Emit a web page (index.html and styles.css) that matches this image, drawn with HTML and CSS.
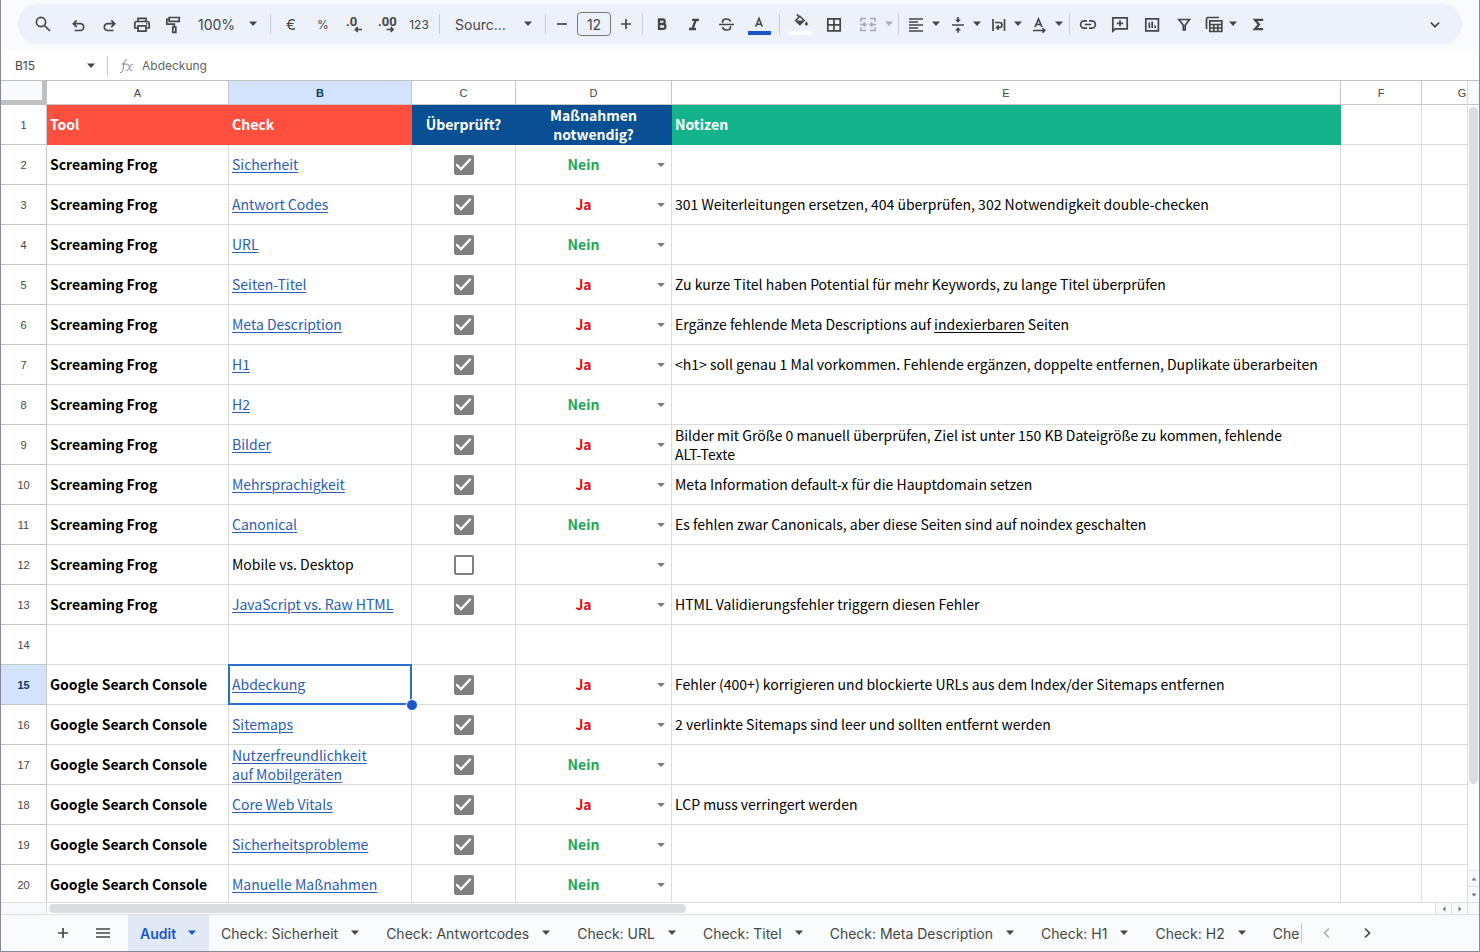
FILE: index.html
```html
<!DOCTYPE html>
<html lang="de">
<head>
<meta charset="utf-8">
<title>Audit</title>
<link rel="stylesheet" href="styles.css">
</head>
<body>
<svg class="sprite" aria-hidden="true">
  <symbol id="caret" viewBox="0 0 10 6"><path d="M1 .5h8L5 5z"/></symbol>
</svg>
<div class="app">
  <header class="top">
    <div class="toolbar" role="toolbar" aria-label="Werkzeuge">
      <button class="tool first" aria-label="Suchen"><svg class="icon" viewBox="0 0 20 20"><circle cx="8" cy="8" r="4.6"/><path d="M11.5 11.5 17 17"/></svg></button>
      <button class="tool" aria-label="Rückgängig"><svg class="icon" viewBox="0 0 20 20"><path d="M8.700 6.300 5.300 9.700l3.400 3.400M5.500 9.700h6.800a3.400 3.400 0 0 1 0 6.800H6.500"/></svg></button>
      <button class="tool" aria-label="Wiederholen"><svg class="icon" viewBox="0 0 20 20"><path d="m11.300 6.300 3.400 3.400-3.400 3.400M14.500 9.700H7.700a3.400 3.400 0 0 0 0 6.800h5.800"/></svg></button>
      <button class="tool" aria-label="Drucken"><svg class="icon" viewBox="0 0 20 20"><path d="M6 7.500V4.300h8v3.200M5.500 14H2.800V9.500a2 2 0 0 1 2-2h10.400a2 2 0 0 1 2 2V14h-2.700M6 11.800h8v5.400H6z"/><path class="solid" d="M14 9h1.500v1.500H14z"/></svg></button>
      <button class="tool" aria-label="Format übertragen"><svg class="icon" viewBox="0 0 20 20"><path d="M5.200 3.500h10v3.800h-10zM5.200 5.300H2.800v4.800h7.500v2.700M8.800 13h3v5.300h-3z"/></svg></button>
      <select class="zoom" aria-label="Zoom"><option>100%</option></select>
      <span class="sep"></span>
      <button class="tool light" aria-label="Währung">€</button>
      <button class="tool light small" aria-label="Prozent">%</button>
      <button class="tool" aria-label="Dezimalstelle löschen"><svg class="icon" viewBox="0 0 20 20"><text x="1" y="12">.0</text><path d="M17 15.500h-6.500M12.800 13.200l-2.300 2.300 2.300 2.300"/></svg></button>
      <button class="tool" aria-label="Dezimalstelle hinzufügen"><svg class="icon" viewBox="0 0 20 20"><text x="1" y="12">.00</text><path d="M9.500 15.500H16M13.700 13.200l2.300 2.300-2.300 2.300"/></svg></button>
      <button class="tool light small" aria-label="Zahlenformat">123</button>
      <span class="sep"></span>
      <select class="font" aria-label="Schriftart"><option>Sourc...</option></select>
      <span class="sep"></span>
      <button class="tool narrow" aria-label="Kleiner"><svg class="icon" viewBox="0 0 20 20"><path d="M5 10h10"/></svg></button>
      <input class="size" type="text" value="12" aria-label="Schriftgröße">
      <button class="tool narrow" aria-label="Größer"><svg class="icon" viewBox="0 0 20 20"><path d="M5 10h10M10 5v10"/></svg></button>
      <span class="sep"></span>
      <button class="tool" aria-label="Fett"><svg class="icon bold" viewBox="0 0 20 20"><path d="M6 5.500h3.500a2.200 2.200 0 0 1 0 4.500H6zM6 10h4a2.400 2.400 0 0 1 0 4.800H6z"/></svg></button>
      <button class="tool" aria-label="Kursiv"><svg class="icon bold" viewBox="0 0 20 20"><path d="M7 5.800h7M4 15h7M10.800 6 7.300 15"/></svg></button>
      <button class="tool" aria-label="Durchgestrichen"><svg class="icon" viewBox="0 0 20 20"><path d="M2 10.500h15M13.500 7.500C13 5.800 11.500 5 9.500 5 7 5 5.500 6 5.500 7.600c0 .5.200 1 .5 1.300M5.500 13.300c.5 1.800 2 2.700 4 2.700 2.500 0 4-1 4-2.700 0-.4-.1-.7-.2-1"/></svg></button>
      <button class="tool swatch" aria-label="Textfarbe"><svg class="icon" viewBox="0 0 20 20"><path d="M6.300 15.200 10 6l3.700 9.200M7.600 12.500h4.800"/></svg><span class="bar blue"></span></button>
      <span class="sep"></span>
      <button class="tool wide swatch" aria-label="Füllfarbe"><svg class="icon" viewBox="0 0 20 20"><path d="m5.300 1.500 2.500 2.500M8.800 3.600l4.700 4.700-4.700 4.700L4 8.300z"/><path class="solid" d="M4.500 8.300h9l-4.700 4.700zM16 9.500c1 1.300 1.600 2.100 1.600 2.900a1.600 1.600 0 0 1-3.200 0c0-.8.600-1.600 1.600-2.900z"/></svg><span class="bar white"></span></button>
      <button class="tool wide" aria-label="Rahmen"><svg class="icon" viewBox="0 0 20 20"><path d="M3.800 4.800h12.400v12H3.800zM10 4.800v12M3.800 10.800h12.400"/></svg></button>
      <button class="combo merge faded" aria-label="Zellen verbinden"><svg class="icon" viewBox="0 0 20 20"><path d="M8 4.500H3v3M12 4.500h5v3M8 16.500H3v-3M12 16.500h5v-3M2 10.500h5.500M5.500 8.300l2.200 2.200-2.200 2.200M18 10.500h-5.500M14.500 8.300l-2.200 2.200 2.200 2.200"/></svg><svg class="caret"><use href="#caret"/></svg></button>
      <span class="sep"></span>
      <button class="combo" aria-label="Ausrichten"><svg class="icon" viewBox="0 0 20 20"><path d="M2 5h14M2 8h9M2 11h14M2 14h9M2 17h14"/></svg><svg class="caret"><use href="#caret"/></svg></button>
      <button class="combo" aria-label="Vertikal ausrichten"><svg class="icon" viewBox="0 0 20 20"><path d="M4 11h12M10 3v4.500M10 18.800v-4.300"/><path class="solid" d="M7 5.500h6L10 8.800zM7 16.500h6l-3-3.300z"/></svg><svg class="caret"><use href="#caret"/></svg></button>
      <button class="combo" aria-label="Textumbruch"><svg class="icon" viewBox="0 0 20 20"><path d="M4 5v12M15.500 5v12M6 8.500h4.500a2.500 2.500 0 0 1 0 5H8M9.800 11.300l-2.200 2.200 2.200 2.200"/></svg><svg class="caret"><use href="#caret"/></svg></button>
      <button class="combo" aria-label="Textdrehung"><svg class="icon" viewBox="0 0 20 20"><path d="M5 13 8.500 5 12 13M6.200 10.500h4.600M3 16.500h11.500M12.500 14.300l2.200 2.200-2.200 2.200"/></svg><svg class="caret"><use href="#caret"/></svg></button>
      <span class="sep tight"></span>
      <button class="tool" aria-label="Link"><svg class="icon" viewBox="0 0 20 20"><path d="M9 6.800H6.300a3.700 3.700 0 0 0 0 7.400H9M11 6.800h2.700a3.700 3.700 0 0 1 0 7.400H11M6.800 10.500h6.400"/></svg></button>
      <button class="tool" aria-label="Kommentar"><svg class="icon" viewBox="0 0 20 20"><path d="M2.800 17V3.800h14.400v11H5.200zM10 6.300v6M7 9.300h6"/></svg></button>
      <button class="tool" aria-label="Diagramm"><svg class="icon" viewBox="0 0 20 20"><path d="M3.800 4.800h12.600v12H3.800zM7.300 8.500V14M10.200 7.500V14M13.200 11.500V14"/></svg></button>
      <button class="tool" aria-label="Filter"><svg class="icon" viewBox="0 0 20 20"><path d="M5 5.500h10.500l-4.300 5.700V16H9.300v-4.800z"/></svg></button>
      <button class="combo" aria-label="Filteransichten"><svg class="icon" viewBox="0 0 20 20"><path d="M2.500 15V5a1.500 1.500 0 0 1 1.500-1.500h11M5.800 6.800h12v10.700h-12zM5.800 10.500h12M5.800 14h12M9.800 10.500v7M13.800 10.500v7"/></svg><svg class="caret"><use href="#caret"/></svg></button>
      <button class="tool" aria-label="Funktionen"><svg class="icon bold" viewBox="0 0 20 20"><path d="M15 7V5.800H8l4 4.700-4 4.700h7V14"/></svg></button>
      <button class="tool last" aria-label="Menüs ausblenden"><svg class="icon" viewBox="0 0 20 20"><path d="m5.800 8.500 4.200 4.200 4.200-4.200"/></svg></button>
    </div>
  </header>
  <div class="formula">
    <input class="name" type="text" value="B15" aria-label="Namenfeld">
    <svg class="caret"><use href="#caret"/></svg>
    <span class="sep"></span>
    <svg class="fx" viewBox="0 0 16 16" aria-hidden="true"><path d="M1 14.500c2 .5 2.500-1 3-3.500l1-6c.4-2.500 1.200-3.500 3.200-3M2.500 6h5M7.500 6.500c2-.8 2.500.5 3 3s1 4 3 3M14 6.300c-2-.5-2.700 1-3.500 3s-1.800 4-3.500 3"/></svg>
    <input class="content" type="text" value="Abdeckung" aria-label="Bearbeitungsleiste">
  </div>
  <main class="sheet">
    <div class="grid">
      <table>
        <colgroup><col class="c0"><col class="ca"><col class="cb"><col class="cc"><col class="cd"><col class="ce"><col class="cf"><col class="cf"></colgroup>
        <thead><tr><th class="corner"></th><th>A</th><th class="active">B</th><th>C</th><th>D</th><th>E</th><th>F</th><th>G</th></tr></thead>
        <tbody>
          <tr class="title"><th>1</th><td class="red">Tool</td><td class="red">Check</td><td class="navy">Überprüft?</td><td class="navy">Maßnahmen<br>notwendig?</td><td class="green">Notizen</td><td></td><td></td></tr>
          <tr><th>2</th><td class="b">Screaming Frog</td><td><a href="#">Sicherheit</a></td><td class="tick"><input type="checkbox" aria-label="Überprüft 2" checked></td><td class="pick"><select class="no" aria-label="Maßnahmen 2"><option>Nein</option><option>Ja</option></select></td><td></td><td></td><td></td></tr>
          <tr><th>3</th><td class="b">Screaming Frog</td><td><a href="#">Antwort Codes</a></td><td class="tick"><input type="checkbox" aria-label="Überprüft 3" checked></td><td class="pick"><select class="yes" aria-label="Maßnahmen 3"><option>Ja</option><option>Nein</option></select></td><td>301 Weiterleitungen ersetzen, 404 überprüfen, 302 Notwendigkeit double-checken</td><td></td><td></td></tr>
          <tr><th>4</th><td class="b">Screaming Frog</td><td><a href="#">URL</a></td><td class="tick"><input type="checkbox" aria-label="Überprüft 4" checked></td><td class="pick"><select class="no" aria-label="Maßnahmen 4"><option>Nein</option><option>Ja</option></select></td><td></td><td></td><td></td></tr>
          <tr><th>5</th><td class="b">Screaming Frog</td><td><a href="#">Seiten-Titel</a></td><td class="tick"><input type="checkbox" aria-label="Überprüft 5" checked></td><td class="pick"><select class="yes" aria-label="Maßnahmen 5"><option>Ja</option><option>Nein</option></select></td><td>Zu kurze Titel haben Potential für mehr Keywords, zu lange Titel überprüfen</td><td></td><td></td></tr>
          <tr><th>6</th><td class="b">Screaming Frog</td><td><a href="#">Meta Description</a></td><td class="tick"><input type="checkbox" aria-label="Überprüft 6" checked></td><td class="pick"><select class="yes" aria-label="Maßnahmen 6"><option>Ja</option><option>Nein</option></select></td><td>Ergänze fehlende Meta Descriptions auf <u>indexierbaren</u> Seiten</td><td></td><td></td></tr>
          <tr><th>7</th><td class="b">Screaming Frog</td><td><a href="#">H1</a></td><td class="tick"><input type="checkbox" aria-label="Überprüft 7" checked></td><td class="pick"><select class="yes" aria-label="Maßnahmen 7"><option>Ja</option><option>Nein</option></select></td><td>&lt;h1&gt; soll genau 1 Mal vorkommen. Fehlende ergänzen, doppelte entfernen, Duplikate überarbeiten</td><td></td><td></td></tr>
          <tr><th>8</th><td class="b">Screaming Frog</td><td><a href="#">H2</a></td><td class="tick"><input type="checkbox" aria-label="Überprüft 8" checked></td><td class="pick"><select class="no" aria-label="Maßnahmen 8"><option>Nein</option><option>Ja</option></select></td><td></td><td></td><td></td></tr>
          <tr><th>9</th><td class="b">Screaming Frog</td><td><a href="#">Bilder</a></td><td class="tick"><input type="checkbox" aria-label="Überprüft 9" checked></td><td class="pick"><select class="yes" aria-label="Maßnahmen 9"><option>Ja</option><option>Nein</option></select></td><td>Bilder mit Größe 0 manuell überprüfen, Ziel ist unter 150 KB Dateigröße zu kommen, fehlende<br>ALT-Texte</td><td></td><td></td></tr>
          <tr><th>10</th><td class="b">Screaming Frog</td><td><a href="#">Mehrsprachigkeit</a></td><td class="tick"><input type="checkbox" aria-label="Überprüft 10" checked></td><td class="pick"><select class="yes" aria-label="Maßnahmen 10"><option>Ja</option><option>Nein</option></select></td><td>Meta Information default-x für die Hauptdomain setzen</td><td></td><td></td></tr>
          <tr><th>11</th><td class="b">Screaming Frog</td><td><a href="#">Canonical</a></td><td class="tick"><input type="checkbox" aria-label="Überprüft 11" checked></td><td class="pick"><select class="no" aria-label="Maßnahmen 11"><option>Nein</option><option>Ja</option></select></td><td>Es fehlen zwar Canonicals, aber diese Seiten sind auf noindex geschalten</td><td></td><td></td></tr>
          <tr><th>12</th><td class="b">Screaming Frog</td><td>Mobile vs. Desktop</td><td class="tick"><input type="checkbox" aria-label="Überprüft 12"></td><td class="pick"><select aria-label="Maßnahmen 12"><option></option><option>Ja</option><option>Nein</option></select></td><td></td><td></td><td></td></tr>
          <tr><th>13</th><td class="b">Screaming Frog</td><td><a href="#">JavaScript vs. Raw HTML</a></td><td class="tick"><input type="checkbox" aria-label="Überprüft 13" checked></td><td class="pick"><select class="yes" aria-label="Maßnahmen 13"><option>Ja</option><option>Nein</option></select></td><td>HTML Validierungsfehler triggern diesen Fehler</td><td></td><td></td></tr>
          <tr><th>14</th><td></td><td></td><td></td><td></td><td></td><td></td><td></td></tr>
          <tr><th class="active">15</th><td class="b">Google Search Console</td><td class="selected"><a href="#">Abdeckung</a></td><td class="tick"><input type="checkbox" aria-label="Überprüft 15" checked></td><td class="pick"><select class="yes" aria-label="Maßnahmen 15"><option>Ja</option><option>Nein</option></select></td><td>Fehler (400+) korrigieren und blockierte URLs aus dem Index/der Sitemaps entfernen</td><td></td><td></td></tr>
          <tr><th>16</th><td class="b">Google Search Console</td><td><a href="#">Sitemaps</a></td><td class="tick"><input type="checkbox" aria-label="Überprüft 16" checked></td><td class="pick"><select class="yes" aria-label="Maßnahmen 16"><option>Ja</option><option>Nein</option></select></td><td>2 verlinkte Sitemaps sind leer und sollten entfernt werden</td><td></td><td></td></tr>
          <tr><th>17</th><td class="b">Google Search Console</td><td><a href="#">Nutzerfreundlichkeit<br>auf Mobilgeräten</a></td><td class="tick"><input type="checkbox" aria-label="Überprüft 17" checked></td><td class="pick"><select class="no" aria-label="Maßnahmen 17"><option>Nein</option><option>Ja</option></select></td><td></td><td></td><td></td></tr>
          <tr><th>18</th><td class="b">Google Search Console</td><td><a href="#">Core Web Vitals</a></td><td class="tick"><input type="checkbox" aria-label="Überprüft 18" checked></td><td class="pick"><select class="yes" aria-label="Maßnahmen 18"><option>Ja</option><option>Nein</option></select></td><td>LCP muss verringert werden</td><td></td><td></td></tr>
          <tr><th>19</th><td class="b">Google Search Console</td><td><a href="#">Sicherheitsprobleme</a></td><td class="tick"><input type="checkbox" aria-label="Überprüft 19" checked></td><td class="pick"><select class="no" aria-label="Maßnahmen 19"><option>Nein</option><option>Ja</option></select></td><td></td><td></td><td></td></tr>
          <tr><th>20</th><td class="b">Google Search Console</td><td><a href="#">Manuelle Maßnahmen</a></td><td class="tick"><input type="checkbox" aria-label="Überprüft 20" checked></td><td class="pick"><select class="no" aria-label="Maßnahmen 20"><option>Nein</option><option>Ja</option></select></td><td></td><td></td><td></td></tr>
        </tbody>
      </table>
    </div>
    <div class="vscroll">
      <div class="vhead"></div>
      <div class="vtrack"><div class="vthumb"></div></div>
      <button class="step" aria-label="Nach oben"><svg viewBox="0 0 6 6"><path d="M.5 4.500h5L3 1.500z"/></svg></button>
      <button class="step" aria-label="Nach unten"><svg viewBox="0 0 6 6"><path d="M.5 1.500h5L3 4.500z"/></svg></button>
    </div>
  </main>
  <div class="hscroll">
    <div class="hhead"></div>
    <div class="htrack"><div class="hthumb"></div></div>
    <button class="step" aria-label="Nach links"><svg viewBox="0 0 6 6"><path d="M4.500 .5v5L1.500 3z"/></svg></button>
    <button class="step" aria-label="Nach rechts"><svg viewBox="0 0 6 6"><path d="M1.500 .5v5L4.500 3z"/></svg></button>
    <div class="hcorner"></div>
  </div>
  <footer class="tabs">
    <button class="side" aria-label="Tabellenblatt hinzufügen"><svg class="icon" viewBox="0 0 20 20"><path d="M5 10h10M10 5v10"/></svg></button>
    <button class="side" aria-label="Alle Tabellenblätter"><svg class="icon" viewBox="0 0 20 20"><path d="M3 6h14M3 10h14M3 14h14"/></svg></button>
    <nav class="strip">
      <button class="tab current">Audit<svg class="caret"><use href="#caret"/></svg></button>
      <button class="tab">Check: Sicherheit<svg class="caret"><use href="#caret"/></svg></button>
      <button class="tab">Check: Antwortcodes<svg class="caret"><use href="#caret"/></svg></button>
      <button class="tab">Check: URL<svg class="caret"><use href="#caret"/></svg></button>
      <button class="tab">Check: Titel<svg class="caret"><use href="#caret"/></svg></button>
      <button class="tab">Check: Meta Description<svg class="caret"><use href="#caret"/></svg></button>
      <button class="tab">Check: H1<svg class="caret"><use href="#caret"/></svg></button>
      <button class="tab">Check: H2<svg class="caret"><use href="#caret"/></svg></button>
      <button class="tab">Che</button>
    </nav>
    <button class="side faded" aria-label="Zurückblättern"><svg class="icon" viewBox="0 0 20 20"><path d="M12 5.500 7.500 10l4.500 4.500"/></svg></button>
    <button class="side" aria-label="Weiterblättern"><svg class="icon" viewBox="0 0 20 20"><path d="M8 5.500l4.500 4.500L8 14.500"/></svg></button>
  </footer>
</div>
</body>
</html>
```
FILE: styles.css
```css
* { box-sizing: border-box; }

body {
  margin: 0;
  background: #fff;
  color: #444746;
  font-family: Inter, Roboto, sans-serif;
}

button, input, select {
  margin: 0;
  padding: 0;
  border: 0;
  background: none;
  color: inherit;
  font: inherit;
}

.sprite { display: none; }

.app {
  display: flex;
  flex-direction: column;
  height: 100vh;
  border: 1px solid #858b96;
  border-top: 0;
  overflow: hidden;
}

.icon {
  flex: none;
  width: 20px;
  height: 20px;
  fill: none;
  stroke: #444746;
  stroke-width: 1.7;
}
.icon.bold { stroke-width: 2.3; }
.icon .solid { fill: #444746; stroke: none; }
.icon text {
  fill: #444746;
  stroke: none;
  font: 700 13px Roboto, sans-serif;
}
.caret {
  flex: none;
  width: 10px;
  height: 6px;
  fill: #444746;
}

/* Toolbar */
.top { padding: 4px 17px 7px; background: #f9fbfd; }
.toolbar {
  display: flex;
  align-items: center;
  height: 40px;
  padding: 0 11px 0 9px;
  border-radius: 20px;
  background: #edf1fb;
}
.tool, .combo {
  display: flex;
  flex: none;
  align-items: center;
  justify-content: center;
  width: 32px;
  height: 30px;
}
.tool.first { margin-right: 3px; }
.tool.last { margin-left: auto; }
.tool.narrow { width: 24px; }
.tool.wide { width: 33px; }
.tool.light { font-size: 15px; }
.tool.small { font-size: 12px; }
.combo { width: 41px; gap: 4px; }
.combo.merge { width: 44px; gap: 6px; justify-content: flex-end; }
.faded { opacity: 0.4; }
.sep {
  flex: none;
  width: 1px;
  height: 20px;
  margin: 0 4px;
  background: #c7cad1;
}
.sep.tight { margin: 0 2px; }
.zoom, .font {
  flex: none;
  height: 30px;
  appearance: none;
  font-size: 14px;
  background: url("data:image/svg+xml,%3Csvg xmlns='http://www.w3.org/2000/svg' width='10' height='6'%3E%3Cpath d='M1 .5h8L5 5z' fill='%23444746'/%3E%3C/svg%3E") no-repeat right 8px center;
}
.zoom { width: 76px; padding-left: 8px; }
.font { width: 97px; padding-left: 11px; }
.size {
  flex: none;
  width: 34px;
  height: 24px;
  margin: 0 3px;
  border: 1px solid #747775;
  border-radius: 4px;
  font-size: 14px;
  text-align: center;
}
.swatch { flex-direction: column; }
.swatch .icon { height: 18px; }
.bar { width: 23px; height: 4px; }
.bar.blue { background: #1a56c8; }
.bar.white { background: #fff; }

/* Formula bar */
.formula {
  display: flex;
  flex: none;
  align-items: center;
  height: 30px;
  padding-left: 14px;
  border-bottom: 1px solid #c0c0c0;
  font-size: 12px;
}
.name { width: 71px; }
.formula .sep { margin: 0 11px; }
.fx {
  width: 16px;
  height: 16px;
  margin-right: 7px;
  fill: none;
  stroke: #80868b;
}
.content { flex: 1; min-width: 0; color: #5f6368; }

/* Sheet */
.sheet { display: flex; flex: 1; min-height: 0; }
.grid { flex: 1; min-width: 0; overflow: hidden; }
table {
  width: 1502px;
  table-layout: fixed;
  border-collapse: separate;
  border-spacing: 0;
  color: #000;
  font-family: "Noto Sans CJK SC", sans-serif;
  font-size: 14px;
  line-height: 19px;
}
.c0 { width: 46px; }
.ca { width: 182px; }
.cb { width: 183px; }
.cc { width: 104px; }
.cd { width: 156px; }
.ce { width: 669px; }
.cf { width: 81px; }
th, td {
  height: 40px;
  padding: 0 3px;
  border: solid #dcdcdc;
  border-width: 0 1px 1px 0;
  white-space: nowrap;
}
td { text-align: left; }
th {
  border-color: #c4c7c5;
  color: #444746;
  font: 400 11px "Liberation Sans", Arial, sans-serif;
}
thead th { height: 24px; }
.active { background: #d3e3fd; color: #0b3a66; font-weight: 700; }
.corner {
  border: solid #c0c0c0;
  border-width: 0 5px 5px 0;
  background: #f8f9fa;
}
.b { font-weight: 700; }
.title td { color: #fff; font-weight: 700; }
.title .red { background: #ff4f3e; border-color: #ff4f3e; }
.title .navy { background: #084f93; border-color: #084f93; text-align: center; }
.title .green { background: #15b38c; border-color: #15b38c; }
td a { color: #2a5db8; }
td a, td u { text-decoration-thickness: 1px; text-underline-offset: 2px; }

.tick { text-align: center; }
.tick input {
  display: grid;
  width: 20px;
  height: 20px;
  margin: 0 auto;
  appearance: none;
  border: 2px solid #808080;
  border-radius: 2px;
}
.tick input:checked { background: #808080; }
.tick input:checked::before {
  content: "";
  width: 16px;
  height: 16px;
  background: #fff;
  clip-path: polygon(0 54%, 9% 44%, 34% 68%, 90% 10%, 100% 21%, 34% 89%);
}
.pick { padding: 0; }
.pick select {
  display: block;
  width: 100%;
  height: 39px;
  padding-right: 20px;
  appearance: none;
  background: url("data:image/svg+xml,%3Csvg xmlns='http://www.w3.org/2000/svg' width='8' height='4'%3E%3Cpath d='M0 0h8L4 4z' fill='%23777'/%3E%3C/svg%3E") no-repeat right 6px center;
  font-weight: 700;
  text-align: center;
  text-align-last: center;
}
.no { color: #24a653; }
.yes { color: #e0101b; }

.selected { position: relative; }
.selected::before {
  content: "";
  position: absolute;
  inset: -1px;
  border: 2px solid #2a6fcf;
}
.selected::after {
  content: "";
  position: absolute;
  right: -7px;
  bottom: -7px;
  width: 10px;
  height: 10px;
  border: 1px solid #fff;
  border-radius: 50%;
  background: #1a56c8;
}
.selected a { position: relative; z-index: 1; }

/* Scroll bars */
.vscroll {
  display: flex;
  flex: none;
  flex-direction: column;
  width: 12px;
  border-left: 1px solid #dcdcdc;
}
.vhead { height: 24px; border-bottom: 1px solid #c4c7c5; background: #f8f9fa; }
.vtrack { flex: 1; padding: 2px 1px; }
.vthumb { height: 89%; border-radius: 5px; background: #dadce0; }
.step {
  display: grid;
  flex: none;
  place-items: center;
  background: #f8f9fa;
}
.step svg { width: 6px; height: 6px; fill: #777; }
.vscroll .step { height: 16px; border-top: 1px solid #e1e3e6; }
.hscroll {
  display: flex;
  flex: none;
  height: 13px;
  border: solid #dcdfe3;
  border-width: 1px 0;
}
.hhead { flex: none; width: 46px; border-right: 1px solid #dcdcdc; background: #f8f9fa; }
.htrack { flex: 1; padding: 1px 2px; }
.hthumb { width: 46%; height: 9px; border-radius: 5px; background: #dadce0; }
.hscroll .step { width: 16px; border-left: 1px solid #dcdcdc; }
.hcorner { width: 12px; border-left: 1px solid #dcdcdc; background: #f8f9fa; }

/* Sheet tabs */
.tabs {
  display: flex;
  flex: none;
  height: 36px;
  padding-left: 42px;
  padding-right: 92px;
  background: #f9fbfd;
  font-size: 14px;
}
.side { display: grid; flex: none; place-items: center; width: 40px; }
.strip + .side { margin-left: 3px; }
.strip {
  display: flex;
  flex: 1;
  align-items: center;
  min-width: 0;
  margin-left: 5px;
  overflow: hidden;
}
.strip::after {
  content: "";
  flex: none;
  width: 1px;
  height: 20px;
  margin-left: -12px;
  background: #c7cad1;
}
.tab {
  display: flex;
  flex: none;
  align-items: center;
  gap: 12px;
  height: 100%;
  padding: 0 14px 0 12px;
  white-space: nowrap;
}
.tab:last-child { padding-right: 14px; }
.current {
  gap: 11px;
  padding-right: 12px;
  background: #e1e9f7;
  color: #1a56c8;
  font-weight: 600;
}
.current .caret { fill: #1a56c8; }
```
